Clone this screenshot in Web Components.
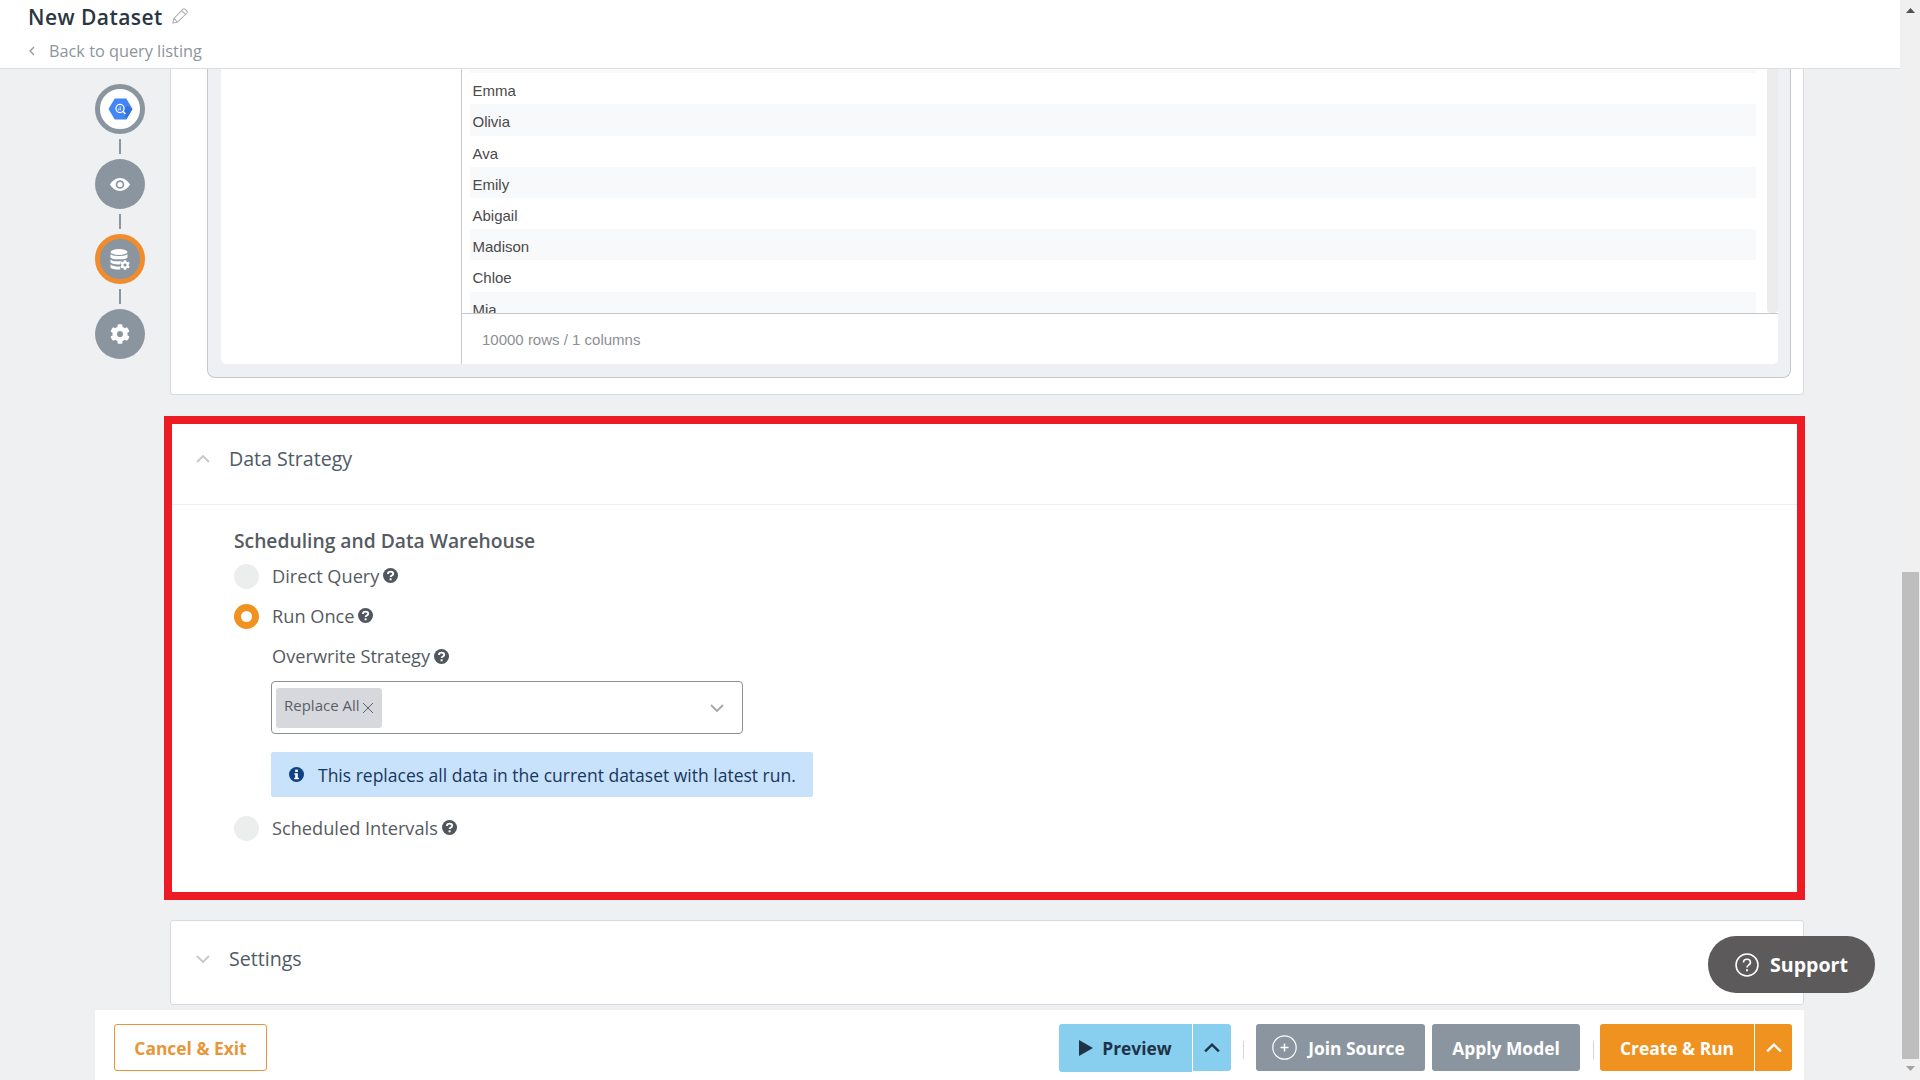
<!DOCTYPE html>
<html lang="en">
<head>
<meta charset="utf-8">
<title>New Dataset</title>
<style>
  html, body { margin: 0; height: 100%; overflow: hidden; }
  body { background: #eff0f2; font-family: "Open Sans", "Noto Sans", sans-serif; }
</style>
</head>
<body>
<dataset-app></dataset-app>

<script>
const GEAR = 'M487.4 315.7l-42.6-24.6c4.3-23.2 4.3-47 0-70.2l42.6-24.6c4.9-2.8 7.1-8.6 5.5-14-11.1-35.6-30-67.8-54.7-94.6-3.8-4.1-10-5.1-14.8-2.3L380.8 110c-17.9-15.4-38.5-27.3-60.8-35.1V25.8c0-5.6-3.9-10.5-9.4-11.7-36.7-8.2-74.3-7.8-109.2 0-5.5 1.2-9.4 6.1-9.4 11.7V75c-22.2 7.9-42.8 19.8-60.8 35.1L88.7 85.5c-4.9-2.8-11-1.9-14.8 2.3-24.7 26.7-43.6 58.9-54.7 94.6-1.7 5.4.6 11.2 5.5 14L67.3 221c-4.3 23.2-4.3 47 0 70.2l-42.6 24.6c-4.9 2.8-7.1 8.6-5.5 14 11.1 35.6 30 67.8 54.7 94.6 3.8 4.1 10 5.1 14.8 2.3l42.6-24.6c17.9 15.4 38.5 27.3 60.8 35.1v49.2c0 5.6 3.9 10.5 9.4 11.7 36.7 8.2 74.3 7.8 109.2 0 5.5-1.2 9.4-6.1 9.4-11.7v-49.2c22.2-7.9 42.8-19.8 60.8-35.1l42.6 24.6c4.9 2.8 11 1.9 14.8-2.3 24.7-26.7 43.6-58.9 54.7-94.6 1.5-5.5-.7-11.3-5.6-14.1zM256 336c-44.1 0-80-35.9-80-80s35.9-80 80-80 80 35.9 80 80-35.9 80-80 80z';

const chevron = (size, dir, color, width) => `
  <svg width="${size}" height="${size}" viewBox="0 0 14 14" fill="none" stroke="${color}" stroke-width="${width}">
    <path d="${dir === 'up' ? 'M1 10 L7 4 L13 10' : 'M1 4 L7 10 L13 4'}"/>
  </svg>`;

const ICONS = {
  query: `<svg width="25" height="22" viewBox="0 0 26 22">
      <path d="M7 0 H19 L25.5 11 L19 22 H7 L.5 11 Z" fill="#4285f4"/>
      <path d="M16.5 14.5 L19 22 L25.5 11 L19.5 8 Z" fill="#3367d6" opacity=".7"/>
      <circle cx="12.5" cy="10.5" r="4.2" fill="none" stroke="#fff" stroke-width="1.3"/>
      <path d="M12.7 8.6 V12.4 M11 10.6 V12.4" stroke="#fff" stroke-width=".9"/>
      <path d="M15.7 13.7 L18.2 16.2" stroke="#fff" stroke-width="1.5"/>
    </svg>`,
  eye: `<svg width="20" height="13" viewBox="0 0 20 13">
      <path fill="#fff" fill-rule="evenodd" d="M10 0 C14.5 0 18 3 20 6.5 C18 10 14.5 13 10 13 C5.5 13 2 10 0 6.5 C2 3 5.5 0 10 0 Z M10 2.2 A4.3 4.3 0 1 0 10 10.8 A4.3 4.3 0 1 0 10 2.2 Z"/>
      <circle cx="10" cy="6.5" r="2.6" fill="#fff"/>
    </svg>`,
  db: `<svg width="20" height="21" viewBox="0 0 20 21" fill="#fff">
      <ellipse cx="9" cy="3" rx="8.5" ry="3"/>
      <path d="M.5 5 C2 7.6 16 7.6 17.5 5 V8.4 C16 11 2 11 .5 8.4 Z"/>
      <path d="M.5 10.4 C2.5 12.6 10 12.8 14 11.4 C11.5 12 10 13.4 9.8 15.4 C6.5 15.8 2 15 .5 13.6 Z"/>
      <path d="M.5 15.6 C2.5 17.2 6.5 17.8 10 17.6 L10.4 20.4 C7 20.8 1.5 20 .5 18.4 Z"/>
      <svg x="10" y="11" width="10" height="10" viewBox="0 0 512 512"><path d="${GEAR}"/></svg>
    </svg>`,
  gear: `<svg width="20" height="20" viewBox="0 0 512 512"><path fill="#fff" d="${GEAR}"/></svg>`,
};

// small filled "?" badge that sits after form labels
class HelpMark extends HTMLElement {
  constructor() {
    super();
    this.attachShadow({ mode: 'open' }).innerHTML = `
      <style>:host { display: inline-flex; margin-left: 4px; }</style>
      <svg width="15" height="15" viewBox="0 0 15 15">
        <circle cx="7.5" cy="7.5" r="7.5" fill="#4f565e"/>
        <path d="M5 5.9 C5 2.9 10.2 2.9 10.2 5.7 C10.2 7.6 7.6 7.5 7.6 9.1" fill="none" stroke="#fff" stroke-width="1.9"/>
        <rect x="6.6" y="10.3" width="2" height="2" fill="#fff"/>
      </svg>`;
  }
}

class AppHeader extends HTMLElement {
  constructor() {
    super();
    this.attachShadow({ mode: 'open' }).innerHTML = `
      <style>
        :host { display: block; height: 68px; background: #fff; border-bottom: 1px solid #dcdee0; padding-left: 28px; box-sizing: content-box; }
        .title { display: flex; align-items: center; height: 34px; font-size: 21px; font-weight: 600; color: #2a3642; letter-spacing: .45px; }
        .title svg { margin-left: 9px; margin-top: -2px; }
        .back { display: flex; align-items: center; height: 34px; font-size: 16.3px; color: #8d959c; }
        .back svg { margin-right: 13px; }
      </style>
      <div class="title"><slot></slot>
        <svg width="16" height="16" viewBox="0 0 15 15" fill="none" stroke="#a9adb1" stroke-width="1">
          <path d="M.8 14.2 L1.8 9.8 L10.3 1 Q11.2 .3 12 1 L14 3 Q14.7 3.8 14 4.7 L5.2 13.2 Z M1.8 9.8 L5.2 13.2 M9 2.4 L12.6 6"/>
        </svg>
      </div>
      <div class="back">
        <svg width="8" height="10" viewBox="0 0 8 10" fill="none" stroke="#8d959c" stroke-width="1.2"><path d="M6 1 L2 5 L6 9"/></svg>
        <slot name="back"></slot>
      </div>`;
  }
}

class StepNode extends HTMLElement {
  constructor() {
    super();
    const icon = this.getAttribute('icon');
    this.attachShadow({ mode: 'open' }).innerHTML = `
      <style>
        :host { display: block; width: 50px; }
        :host(:not(:last-child))::after { content: ""; display: block; width: 2px; height: 15px; margin: 5px auto; background: #8a95a0; }
        .dot { width: 50px; height: 50px; box-sizing: border-box; border-radius: 50%; background: #8a95a0; display: flex; align-items: center; justify-content: center; }
        :host([state=source]) .dot { background: #fff; border: 5px solid #8a95a0; }
        :host([state=active]) .dot { border: 5px solid #f08c2e; }
      </style>
      <div class="dot">${ICONS[icon]}</div>`;
  }
}

class StepRail extends HTMLElement {
  constructor() {
    super();
    this.attachShadow({ mode: 'open' }).innerHTML = `
      <style>:host { display: block; width: 75px; flex: none; padding-top: 15px; box-sizing: border-box; }</style>
      <slot></slot>`;
  }
}

class PreviewTable extends HTMLElement {
  constructor() {
    super();
    const names = ['Emma', 'Olivia', 'Ava', 'Emily', 'Abigail', 'Madison', 'Chloe', 'Mia'];
    const rows = names.map(n => `<div class="row">${n}</div>`).join('');
    this.attachShadow({ mode: 'open' }).innerHTML = `
      <style>
        :host { display: block; box-sizing: border-box; height: 326px; background: #fff; border: 1px solid #d8dadd; border-top: 0; border-radius: 0 0 3px 3px; padding: 0 12px 16px 36px; }
        .frame { height: 100%; box-sizing: border-box; background: #eef0f3; border: 1px solid #c6c8ca; border-top: 0; border-radius: 0 0 8px 8px; padding: 0 12px 13px 13px; }
        .panel { height: 100%; background: #fff; display: flex; border-radius: 0 0 5px 5px; font-family: "Liberation Sans", Arial, sans-serif; font-size: 15px; }
        .fields { width: 240px; flex: none; border-right: 1px solid #c6c8ca; }
        .data { flex: 1; min-width: 0; display: flex; flex-direction: column; }
        .scroll { height: 245px; overflow: hidden; display: flex; border-bottom: 1px solid #c6c8ca; }
        .rows { flex: 1; margin-left: 8px; }
        .rows::before { content: ""; display: block; height: 4.2px; background: #f8f9fa; }
        .row { height: 31.2px; line-height: 35px; padding-left: 2.5px; color: #4a4a4a; }
        .row:nth-child(even) { background: #f8f9fa; }
        .track { width: 11px; margin-left: 11px; background: #ececec; border-radius: 0 0 4px 4px; }
        .count { height: 50px; line-height: 51px; padding-left: 20px; color: #8c8f93; }
      </style>
      <div class="frame"><div class="panel">
        <div class="fields"></div>
        <div class="data">
          <div class="scroll"><div class="rows">${rows}</div><div class="track"></div></div>
          <div class="count">10000 rows / 1 columns</div>
        </div>
      </div></div>`;
  }
}

class PanelCard extends HTMLElement {
  constructor() {
    super();
    const open = this.hasAttribute('open');
    this.attachShadow({ mode: 'open' }).innerHTML = `
      <style>
        :host { display: block; background: #fff; border: 1px solid #d8dadd; border-radius: 3px; }
        :host([flagged]) { border: 8px solid #ed1c24; border-radius: 0; margin: 21px -1px 0 -6px; height: 484px; box-sizing: border-box; }
        .head { height: 83px; display: flex; align-items: center; padding: 0 0 7px 25px; box-sizing: border-box; font-size: 19.6px; color: #4f5a67; }
        :host([flagged]) .head { height: 81px; padding-left: 24px; border-bottom: 1px solid #eceef0; padding-bottom: 10px; }
        .head span { margin-left: 19px; margin-top: -1px; }
        .body { padding: 23px 0 0 62px; }
      </style>
      <div class="head">${chevron(14, open ? 'up' : 'down', '#c6c9cc', 1.9)}<span>${this.getAttribute('heading')}</span></div>
      ${open ? '<div class="body"><slot></slot></div>' : ''}`;
  }
}

class RadioOption extends HTMLElement {
  constructor() {
    super();
    this.attachShadow({ mode: 'open' }).innerHTML = `
      <style>
        :host { display: flex; align-items: center; height: 25px; font-size: 18.2px; color: #555b62; }
        i { width: 25px; height: 25px; border-radius: 50%; background: #eceded; margin-right: 13px; box-sizing: border-box; }
        :host([checked]) i { background: #fff; border: 7px solid #f0921f; }
        .text { display: flex; align-items: center; margin-top: -2px; }
      </style>
      <i></i><div class="text"><slot></slot><help-mark></help-mark></div>`;
  }
}

class TagSelect extends HTMLElement {
  constructor() {
    super();
    this.attachShadow({ mode: 'open' }).innerHTML = `
      <style>
        :host { display: flex; align-items: center; width: 472px; height: 53px; box-sizing: border-box; border: 1px solid #8c8f93; border-radius: 4px; padding: 0 18px 0 4px; background: #fff; }
        .chip { display: flex; align-items: center; height: 40px; width: 106px; box-sizing: border-box; padding: 0 0 5px 8px; background: #d6d8de; border-radius: 3px; font-size: 15px; color: #5b5f66; }
        .chip svg { margin: 5px 0 0 2px; }
        .caret { margin-left: auto; display: flex; }
      </style>
      <div class="chip"><slot></slot>
        <svg width="12" height="12" viewBox="0 0 12 12" stroke="#5b5f66" stroke-width="1"><path d="M1 1 L11 11 M11 1 L1 11"/></svg>
      </div>
      <div class="caret">${chevron(14, 'down', '#a4a7ab', 1.8)}</div>`;
  }
}

class InfoNote extends HTMLElement {
  constructor() {
    super();
    this.attachShadow({ mode: 'open' }).innerHTML = `
      <style>
        :host { display: flex; align-items: center; width: 542px; height: 45px; box-sizing: border-box; padding-left: 18px; background: #c9e2fb; border-radius: 2px; font-size: 17.5px; color: #17375e; }
        svg { margin-right: 14px; }
      </style>
      <svg width="15" height="15" viewBox="0 0 15 15">
        <circle cx="7.5" cy="7.5" r="7.5" fill="#0f4187"/>
        <rect x="6.2" y="2.6" width="2.6" height="2.4" fill="#fff"/>
        <path d="M5.4 6.2 H8.8 V10.8 H9.9 V12.3 H5.2 V10.8 H6.2 V7.7 H5.4 Z" fill="#fff"/>
      </svg>
      <slot></slot>`;
  }
}

class ActionButton extends HTMLElement {
  constructor() {
    super();
    const split = this.hasAttribute('split');
    this.attachShadow({ mode: 'open' }).innerHTML = `
      <style>
        :host { display: flex; height: 47px; --bg: #8a95a0; --fg: #fff; color: var(--fg); font-size: 17.4px; font-weight: 700; }
        :host([kind=blue]) { --bg: #87ceef; --fg: #1f3247; }
        :host([kind=orange]) { --bg: #f0921f; }
        :host([kind=outline]) { --bg: #fff; --fg: #e8963a; }
        .main, .more { display: flex; align-items: center; justify-content: center; background: var(--bg); box-sizing: border-box; }
        .main { width: var(--w); border-radius: 3px; gap: var(--gap, 9px); padding-right: var(--shift, 0); }
        :host([kind=blue]) .main { height: 48px; }
        :host([kind=outline]) .main { border: 1px solid #e8963a; }
        :host([split]) .main { border-radius: 3px 0 0 3px; }
        .more { width: var(--more, 38px); margin-left: 1px; border-radius: 0 3px 3px 0; }
      </style>
      <div class="main"><slot name="icon"></slot><slot></slot></div>
      ${split ? `<div class="more">${chevron(16, 'up', this.getAttribute('kind') === 'blue' ? '#1f3247' : '#fff', 2)}</div>` : ''}`;
  }
}

class ActionBar extends HTMLElement {
  constructor() {
    super();
    this.attachShadow({ mode: 'open' }).innerHTML = `
      <style>
        :host { display: flex; align-items: center; height: 70px; background: #fff; margin: 5px 96px 0 95px; padding: 5px 12px 0 19px; box-sizing: border-box; }
        .right { margin-left: auto; display: flex; align-items: center; }
      </style>
      <slot name="left"></slot>
      <div class="right"><slot></slot></div>`;
  }
}

class BarDivider extends HTMLElement {
  constructor() {
    super();
    this.attachShadow({ mode: 'open' }).innerHTML = `
      <style>:host { display: block; width: 1px; height: 18px; background: #d4d6d8; margin: 5px var(--right, 12px) 0 var(--left, 12px); }</style>`;
  }
}

class SupportPill extends HTMLElement {
  constructor() {
    super();
    this.attachShadow({ mode: 'open' }).innerHTML = `
      <style>
        :host { position: absolute; left: 1708px; top: 936px; width: 167px; height: 57px; box-sizing: border-box; padding-left: 27px; gap: 11px; display: flex; align-items: center; background: #5c5a5a; border-radius: 28px; color: #fff; font-size: 19.6px; font-weight: 700; }
      </style>
      <svg width="24" height="24" viewBox="0 0 23 23" fill="none" stroke="#fff">
        <circle cx="11.5" cy="11.5" r="10.5" stroke-width="1.5"/>
        <path d="M8.2 9 C8.2 5 14.8 5 14.8 9 C14.8 11.5 11.5 11.2 11.5 14" stroke-width="1.6"/>
        <path d="M11.5 15.6 V17.6" stroke-width="1.8"/>
      </svg>
      <slot></slot>`;
  }
}

class PageScrollbar extends HTMLElement {
  constructor() {
    super();
    this.attachShadow({ mode: 'open' }).innerHTML = `
      <style>
        :host { display: flex; flex-direction: column; align-items: center; width: 20px; flex: none; height: 1080px; background: #f0f0f0; }
        .thumb { width: 17px; height: 487px; margin-top: 559px; background: #bebebe; }
        svg { display: block; }
        .up { margin-top: 8px; } .down { margin-top: 7px; }
      </style>
      <svg class="up" width="9" height="5" viewBox="0 0 9 5"><path d="M4.5 0 L9 5 H0 Z" fill="#505050"/></svg>
      <div class="thumb"></div>
      <svg class="down" width="9" height="5" viewBox="0 0 9 5"><path d="M0 0 H9 L4.5 5 Z" fill="#a3a3a3"/></svg>`;
  }
}

class DatasetApp extends HTMLElement {
  constructor() {
    super();
    this.attachShadow({ mode: 'open' }).innerHTML = `
      <style>
        :host { display: flex; width: 1920px; height: 1080px; overflow: hidden; position: relative; }
        .page { width: 1900px; flex: none; display: flex; flex-direction: column; }
        .work { display: flex; padding-left: 95px; height: 936px; }
        .cards { width: 1634px; flex: none; display: flex; flex-direction: column; }
        panel-card.settings { margin-top: 20px; height: 85px; box-sizing: border-box; }
        h3 { margin: 0 0 10px; height: 26px; line-height: 26px; font-size: 19.25px; font-weight: 600; color: #555b62; }
        .nested { margin: 15px 0 19px 37px; }
        .label { display: flex; align-items: center; height: 24px; margin: 15px 0 13px; padding-left: 1px; font-size: 18.2px; color: #555b62; }
        tag-select { margin-bottom: 18px; }
        radio-option + radio-option { margin-top: 15px; }
      </style>
      <div class="page">
        <app-header>New Dataset<span slot="back">Back to query listing</span></app-header>
        <div class="work">
          <step-rail>
            <step-node state="source" icon="query"></step-node>
            <step-node icon="eye"></step-node>
            <step-node state="active" icon="db"></step-node>
            <step-node icon="gear"></step-node>
          </step-rail>
          <div class="cards">
            <preview-table></preview-table>
            <panel-card flagged open heading="Data Strategy">
              <h3>Scheduling and Data Warehouse</h3>
              <radio-option>Direct Query</radio-option>
              <radio-option checked>Run Once</radio-option>
              <div class="nested">
                <div class="label">Overwrite Strategy<help-mark></help-mark></div>
                <tag-select>Replace All</tag-select>
                <info-note>This replaces all data in the current dataset with latest run.</info-note>
              </div>
              <radio-option>Scheduled Intervals</radio-option>
            </panel-card>
            <panel-card class="settings" heading="Settings"></panel-card>
          </div>
        </div>
        <action-bar>
          <action-button slot="left" kind="outline" style="--w:153px">Cancel &amp; Exit</action-button>
          <action-button kind="blue" split style="--w:133px">
            <svg slot="icon" width="14" height="16" viewBox="0 0 14 16"><path d="M0 0 L14 8 L0 16 Z" fill="#1f3247"/></svg>Preview</action-button>
          <bar-divider></bar-divider>
          <action-button style="--w:169px;--gap:11px;--shift:4px">
            <svg slot="icon" width="25" height="25" viewBox="0 0 25 25" fill="none" stroke="#fff"><circle cx="12.5" cy="12.5" r="11.7" stroke-width="1.2"/><path d="M12.5 8.5 V16.5 M8.5 12.5 H16.5" stroke-width="1.5"/></svg>Join Source</action-button>
          <action-button style="--w:148px;margin-left:7px">Apply Model</action-button>
          <bar-divider style="--left:13px;--right:6px"></bar-divider>
          <action-button kind="orange" split style="--w:154px;--more:37px">Create &amp; Run</action-button>
        </action-bar>
      </div>
      <page-scrollbar></page-scrollbar>
      <support-pill>Support</support-pill>`;
  }
}

customElements.define('help-mark', HelpMark);
customElements.define('app-header', AppHeader);
customElements.define('step-node', StepNode);
customElements.define('step-rail', StepRail);
customElements.define('preview-table', PreviewTable);
customElements.define('panel-card', PanelCard);
customElements.define('radio-option', RadioOption);
customElements.define('tag-select', TagSelect);
customElements.define('info-note', InfoNote);
customElements.define('action-button', ActionButton);
customElements.define('action-bar', ActionBar);
customElements.define('bar-divider', BarDivider);
customElements.define('support-pill', SupportPill);
customElements.define('page-scrollbar', PageScrollbar);
customElements.define('dataset-app', DatasetApp);
</script>
</body>
</html>
